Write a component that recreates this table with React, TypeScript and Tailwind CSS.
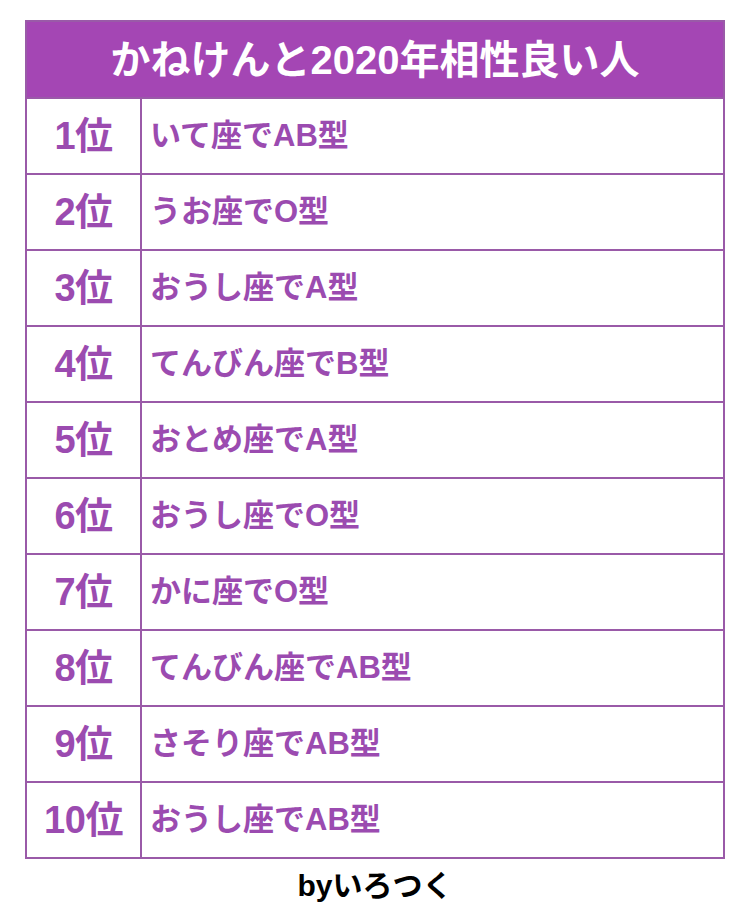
import React from 'react';

const rows = [
  'いて座でAB型',
  'うお座でO型',
  'おうし座でA型',
  'てんびん座でB型',
  'おとめ座でA型',
  'おうし座でO型',
  'かに座でO型',
  'てんびん座でAB型',
  'さそり座でAB型',
  'おうし座でAB型',
];

const font = { fontFamily: '"Liberation Sans", "Noto Sans CJK JP", sans-serif' };

export default function App() {
  return (
    <div className="w-[750px] h-[903px] bg-white pt-[20px]" style={font}>
      <div className="mx-[25px] w-[700px] border-2 border-[#9a5aa8]">
        <div className="h-[75px] bg-[#a446b4] flex items-center justify-center text-white text-[40px] font-bold">
          かねけんと2020年相性良い人
        </div>
        {rows.map((r, i) => (
          <div key={i} className="h-[76px] flex border-t-2 border-[#9a5aa8]">
            <div className="w-[115px] shrink-0 border-r-2 border-[#9a5aa8] flex items-center justify-center text-[38px] font-bold text-[#9b4bb0] tracking-[-0.5px]">
              {i + 1}位
            </div>
            <div className="flex items-center pl-[8px] text-[31px] font-bold text-[#9b4bb0]">
              {r}
            </div>
          </div>
        ))}
      </div>
      <div className="text-center text-[30px] leading-[30px] font-bold text-black mt-[12px]">byいろつく</div>
    </div>
  );
}
